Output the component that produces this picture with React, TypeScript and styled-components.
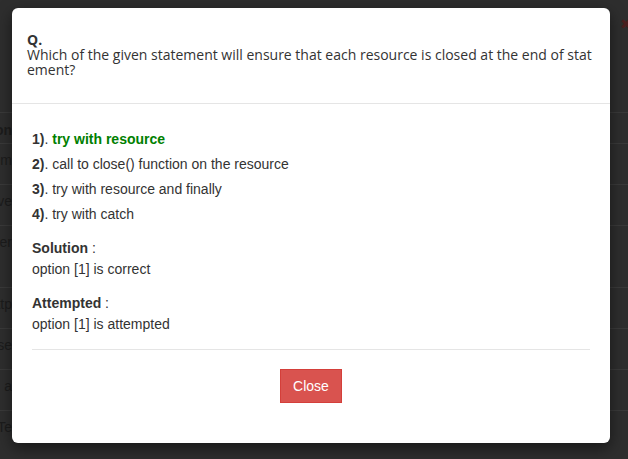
import React from "react";
import styled, { createGlobalStyle } from "styled-components";

const Global = createGlobalStyle`
  html, body { margin: 0; padding: 0; }
  body {
    width: 628px;
    height: 459px;
    overflow: hidden;
    background: #2e2e2e;
    font-family: "Liberation Sans", Arial, sans-serif;
  }
`;

const Page = styled.div`
  position: relative;
  width: 628px;
  height: 459px;
  overflow: hidden;
  background: #2e2e2e;
`;

const TopBar = styled.div`
  height: 112px;
  display: flex;
  justify-content: flex-end;
  align-items: flex-start;
  padding: 16px 0 0 0;
  box-sizing: border-box;
`;

const BgIcon = styled.span`
  color: #4b1f1f;
  font-size: 14px;
  margin-right: -4px;
`;

const Row = styled.div<{ $h: number }>`
  height: ${(p) => p.$h}px;
  border-top: 1px solid #3a3a3a;
  display: flex;
  align-items: flex-start;
  padding-top: ${(p) => (p.$h > 40 ? 6 : 7)}px;
  box-sizing: border-box;
`;

const Cell = styled.div<{ $bold?: boolean }>`
  width: 12px;
  overflow: hidden;
  white-space: nowrap;
  display: flex;
  justify-content: flex-end;
  font-size: 14px;
  line-height: 20px;
  color: #1c1c1c;
  font-weight: ${(p) => (p.$bold ? 700 : 400)};
`;

const Modal = styled.div`
  position: absolute;
  left: 12px;
  top: 8px;
  width: 598px;
  height: 435px;
  background: #fff;
  border-radius: 6px;
  box-shadow: 0 5px 15px rgba(0, 0, 0, 0.5);
  display: flex;
  flex-direction: column;
  box-sizing: border-box;
`;

const Header = styled.div`
  padding: 24px 15px 26px 15px;
  border-bottom: 1px solid #e5e5e5;
  font-family: "Open Sans", sans-serif;
  font-size: 14px;
  line-height: 15px;
  color: #333;
  word-break: break-all;
`;

const QLabel = styled.div`
  font-weight: 700;
`;

const Body = styled.div`
  padding: 25px 20px 0 20px;
  font-size: 14px;
  color: #333;
`;

const Option = styled.div`
  line-height: 20px;
  margin-bottom: 5px;
`;

const Num = styled.b`
  font-weight: 700;
`;

const Correct = styled.b`
  color: #008000;
  font-weight: 700;
`;

const Block = styled.div<{ $top: number }>`
  margin-top: ${(p) => p.$top}px;
  line-height: 21px;
`;

const Divider = styled.div`
  height: 1px;
  background: #e5e5e5;
  margin-top: 14px;
`;

const Footer = styled.div`
  display: flex;
  justify-content: center;
  padding-top: 19px;
`;

const CloseButton = styled.button`
  background: #d9534f;
  border: 1px solid #d43f3a;
  color: #fff;
  font-family: "Liberation Sans", Arial, sans-serif;
  font-size: 14px;
  line-height: 20px;
  padding: 6px 12px;
  border-radius: 0;
  cursor: pointer;
`;

const rows: { h: number; t: string; bold?: boolean }[] = [
  { h: 31, t: "Question", bold: true },
  { h: 41, t: "them" },
  { h: 41, t: "Give" },
  { h: 62, t: "per" },
  { h: 41, t: "http" },
  { h: 41, t: "use" },
  { h: 41, t: " a" },
  { h: 48, t: "Te" },
];

export default function App() {
  return (
    <>
      <Global />
      <Page>
        <TopBar>
          <BgIcon>✖</BgIcon>
        </TopBar>
        {rows.map((r, i) => (
          <Row key={i} $h={r.h}>
            <Cell $bold={r.bold}>{r.t}</Cell>
          </Row>
        ))}
        <Modal>
          <Header>
            <QLabel>Q.</QLabel>
            <div>
              Which of the given statement will ensure that each resource is closed at the end of statement?
            </div>
          </Header>
          <Body>
            <Option>
              <Num>1)</Num>. <Correct>try with resource</Correct>
            </Option>
            <Option>
              <Num>2)</Num>. call to close() function on the resource
            </Option>
            <Option>
              <Num>3)</Num>. try with resource and finally
            </Option>
            <Option>
              <Num>4)</Num>. try with catch
            </Option>
            <Block $top={14}>
              <div>
                <Num>Solution</Num> :
              </div>
              <div>option [1] is correct</div>
            </Block>
            <Block $top={13}>
              <div>
                <Num>Attempted</Num> :
              </div>
              <div>option [1] is attempted</div>
            </Block>
            <Divider />
            <Footer>
              <CloseButton>Close</CloseButton>
            </Footer>
          </Body>
        </Modal>
      </Page>
    </>
  );
}
